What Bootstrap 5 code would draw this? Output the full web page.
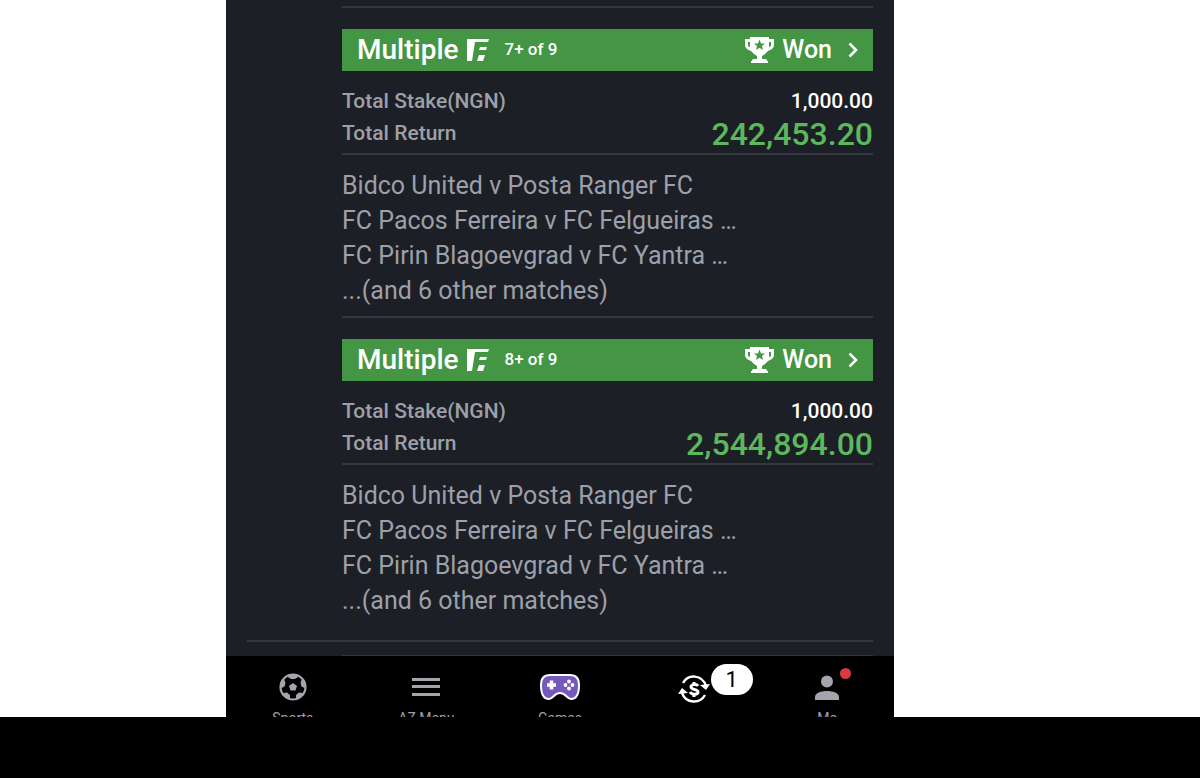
<!DOCTYPE html>
<html lang="en">
<head>
<meta charset="utf-8">
<meta name="viewport" content="width=device-width, initial-scale=1">
<title>Bet History</title>
<link href="https://cdn.jsdelivr.net/npm/bootstrap@5.3.0/dist/css/bootstrap.min.css" rel="stylesheet">
<style>
  body { background: #000; color: #9ea0a9; font-family: Roboto, "Liberation Sans", sans-serif; }
  .stage { display: grid; grid-template-columns: 226fr 668fr 306fr; background: #fff; }
  .app { grid-column: 2; background: #1c1f26; overflow: hidden; }
  .day { padding: 6px 21px 0 21px; }
  .slips { padding-left: 95px; }
  .slip { border-top: 2px solid #353840; padding: 21px 0 8px; }
  .slip-bar { height: 42px; background: #449644; color: #fff; padding: 0 15px; font-weight: 500; }
  .slip-type { font-size: 28px; line-height: 42px; }
  .slip-sys { font-size: 17px; }
  .slip-won { font-size: 25px; }
  .totals { padding: 14px 0 4px; border-bottom: 2px solid #353840; font-weight: 500; font-size: 21px; line-height: 32px; }
  .paid { color: #5cb85c; font-size: 32px; line-height: 34px; margin-bottom: -2px; }
  .matches { padding-top: 13px; font-size: 25px; line-height: 35px; }
  .day-end { margin-top: 14px; border-top: 2px solid #353840; height: 15px; }
  .next-slip { height: 1px; background: #33392f; margin: 0 21px 0 116px; }
  .tabs { background: #000; height: 61px; overflow: hidden; }
  .tab { color: #9ea0a9; font-size: 14px; line-height: 20px; padding-top: 13px; }
  .tab svg { display: block; }
  .tab-icon { height: 36px; margin-bottom: 3px; position: relative; }
  .count { position: absolute; left: 33px; top: -5px; width: 42px; height: 31px; border-radius: 16px; background: #fff; color: #000; font-size: 22px; line-height: 31px; }
  .alert-dot { position: absolute; right: -12px; top: -1px; width: 11px; height: 11px; border-radius: 50%; background: #dc3a3c; }
</style>
</head>
<body>
<svg width="0" height="0" class="position-absolute" aria-hidden="true">
  <symbol id="flex" viewBox="0 0 22 22"><path fill="#fff" d="M0 0h22l-1 3H8L5 22H0zM13 8h7l-1 3h-7zM12 16h6l-2 6h-6z"/></symbol>
  <symbol id="cup" viewBox="0 0 29 26">
    <path fill="#fff" fill-rule="evenodd" d="M5 0h19v2h5v6c0 3-3 5-6 6-2 2-4 4-6 5v3h3c2 0 2 1 2 2h1v2H6v-2h1c0-1 0-2 2-2h3v-3c-2-1-4-3-6-5-3-1-6-3-6-6V2h5zM3 5v3c0 1 1 2 2 2V5zm21 0v5c1 0 2-1 2-2V5z"/>
    <path fill="#449644" d="M14.500 2.500l1.500 4h4l-3 2.500 1 4-3.500-2.300-3.500 2.300 1-4-3-2.500h4z"/>
  </symbol>
  <symbol id="chev" viewBox="0 0 10 16"><path fill="none" stroke="#fff" stroke-width="2.600" d="M1.500 1.500L8 8l-6.500 6.500"/></symbol>
</svg>

<div class="stage">
  <main class="app">
    <section class="day">
      <div class="slips">
        <article class="slip">
          <button type="button" class="slip-bar border-0 w-100 d-flex align-items-center text-start">
            <span class="slip-type">Multiple</span>
            <svg class="ms-2 me-3" width="22" height="22" aria-hidden="true"><use href="#flex"/></svg>
            <span class="slip-sys">7+ of 9</span>
            <svg class="ms-auto" width="29" height="26" aria-hidden="true"><use href="#cup"/></svg>
            <span class="slip-won ms-2 me-3">Won</span>
            <svg width="10" height="16" aria-hidden="true"><use href="#chev"/></svg>
          </button>
          <div class="totals">
            <div class="d-flex justify-content-between"><span>Total Stake(NGN)</span><span class="text-white">1,000.00</span></div>
            <div class="d-flex justify-content-between"><span>Total Return</span><span class="paid">242,453.20</span></div>
          </div>
          <div class="matches text-nowrap">
            <div>Bidco United v Posta Ranger FC</div>
            <div>FC Pacos Ferreira v FC Felgueiras …</div>
            <div>FC Pirin Blagoevgrad v FC Yantra …</div>
            <div>...(and 6 other matches)</div>
          </div>
        </article>
        <article class="slip">
          <button type="button" class="slip-bar border-0 w-100 d-flex align-items-center text-start">
            <span class="slip-type">Multiple</span>
            <svg class="ms-2 me-3" width="22" height="22" aria-hidden="true"><use href="#flex"/></svg>
            <span class="slip-sys">8+ of 9</span>
            <svg class="ms-auto" width="29" height="26" aria-hidden="true"><use href="#cup"/></svg>
            <span class="slip-won ms-2 me-3">Won</span>
            <svg width="10" height="16" aria-hidden="true"><use href="#chev"/></svg>
          </button>
          <div class="totals">
            <div class="d-flex justify-content-between"><span>Total Stake(NGN)</span><span class="text-white">1,000.00</span></div>
            <div class="d-flex justify-content-between"><span>Total Return</span><span class="paid">2,544,894.00</span></div>
          </div>
          <div class="matches text-nowrap">
            <div>Bidco United v Posta Ranger FC</div>
            <div>FC Pacos Ferreira v FC Felgueiras …</div>
            <div>FC Pirin Blagoevgrad v FC Yantra …</div>
            <div>...(and 6 other matches)</div>
          </div>
        </article>
      </div>
      <div class="day-end"></div>
    </section>
    <div class="next-slip"></div>

    <nav class="tabs row g-0 text-center" aria-label="Main">
      <a href="#" class="tab col text-decoration-none d-flex flex-column align-items-center">
        <span class="tab-icon d-flex align-items-center">
          <svg width="28" height="28" viewBox="0 0 28 28" aria-hidden="true">
            <circle cx="14" cy="14" r="12.500" fill="none" stroke="#a4a4ab" stroke-width="2.200"/>
            <path fill="#a4a4ab" d="M14 10l4 3-1.500 4.500h-5L10 13z"/>
            <path fill="#a4a4ab" d="M8 2l6-1 6 1-1 2-3 2h-4L9 4zM1 14l1-6 3-2 1.500 4-1 3.500L2.500 15zM27 14l-1-6-3-2-1.500 4 1 3.500 3 1.500zM4 20l4-.500 3 2.500v4c-3 0-6-3-7-6zM24 20l-4-.500-3 2.500v4c3 0 6-3 7-6z"/>
          </svg>
        </span>
        <span>Sports</span>
      </a>
      <a href="#" class="tab col text-decoration-none d-flex flex-column align-items-center">
        <span class="tab-icon d-flex align-items-center">
          <svg width="28" height="20" viewBox="0 0 28 20" aria-hidden="true"><path fill="#a4a4ab" d="M0 1h28v3H0zM0 8h28v3H0zM0 16h28v3H0z"/></svg>
        </span>
        <span>AZ Menu</span>
      </a>
      <a href="#" class="tab col text-decoration-none d-flex flex-column align-items-center">
        <span class="tab-icon d-flex align-items-center">
          <svg width="40" height="28" viewBox="0 0 40 28" aria-hidden="true">
            <path fill="#7559bd" stroke="#fff" stroke-width="2" d="M10 2h20c6 0 9 4 9 10 0 8-2 14-8 14-4 0-5-6-11-6S13 26 9 26c-6 0-8-6-8-14C1 6 4 2 10 2z"/>
            <path stroke="#fff" stroke-width="3.600" d="M7 12h9M11.500 7.500v9"/>
            <g fill="#fff"><circle cx="29" cy="8.500" r="1.900"/><circle cx="29" cy="15.500" r="1.900"/><circle cx="25.500" cy="12" r="1.900"/><circle cx="32.500" cy="12" r="1.900"/></g>
          </svg>
        </span>
        <span>Games</span>
      </a>
      <a href="#" class="tab col text-decoration-none d-flex flex-column align-items-center">
        <span class="tab-icon d-flex align-items-end">
          <svg width="32" height="32" viewBox="0 0 32 32" aria-hidden="true">
            <g fill="none" stroke="#fff" stroke-width="2.400">
              <path d="M5 10C10 1 24 1 28 13M27 22C22 31 8 31 4 20"/>
              <path d="M20 13c-1-2-7-2-7 1 0 3 7 2 7 5 0 3-6 3-8 0M16 9v3M16 21v3" stroke-width="3"/>
            </g>
            <path fill="#fff" d="M22 12l10-1-4 6zM10 20L0 21l4-6z"/>
          </svg>
          <span class="count">1</span>
        </span>
      </a>
      <a href="#" class="tab col text-decoration-none d-flex flex-column align-items-center">
        <span class="tab-icon d-flex align-items-center">
          <svg width="24" height="25" viewBox="0 0 24 25" aria-hidden="true"><circle cx="12" cy="6.500" r="6" fill="#a4a4ab"/><path fill="#a4a4ab" d="M0 25v-3c0-4 6-6 12-6s12 2 12 6v3z"/></svg>
          <span class="alert-dot"></span>
        </span>
        <span>Me</span>
      </a>
    </nav>
  </main>
</div>
<script src="https://cdn.jsdelivr.net/npm/bootstrap@5.3.0/dist/js/bootstrap.bundle.min.js"></script>
</body>
</html>
